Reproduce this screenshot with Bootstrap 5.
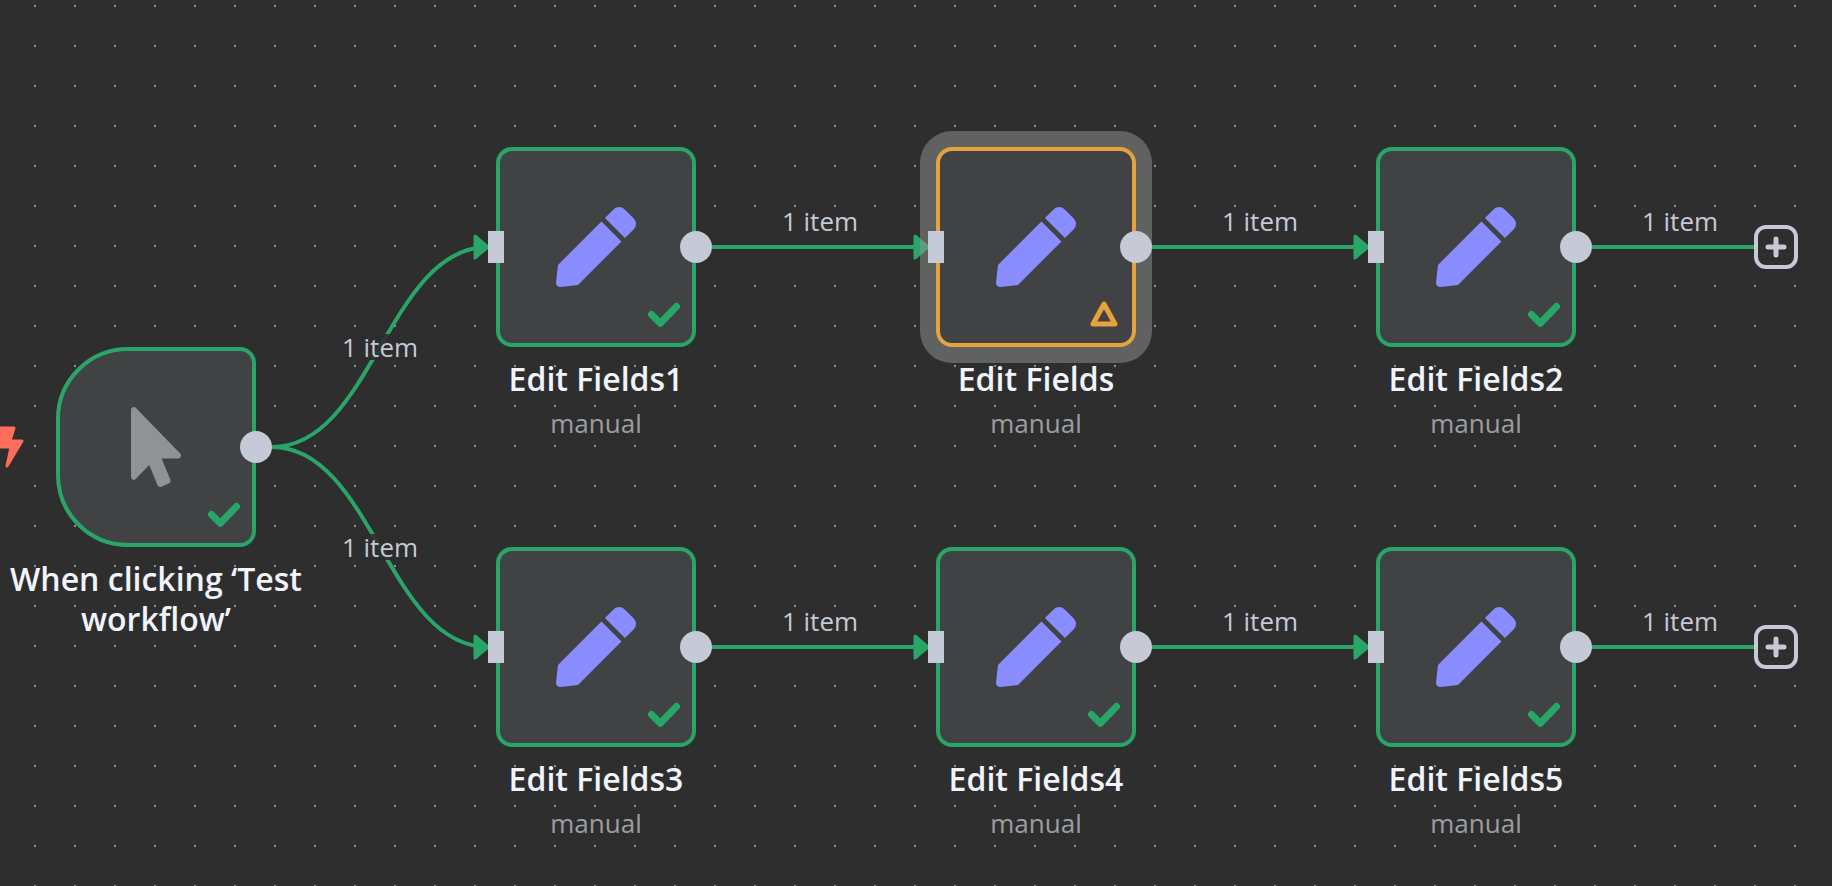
<!DOCTYPE html>
<html lang="en">
<head>
<meta charset="utf-8">
<meta name="viewport" content="width=device-width, initial-scale=1">
<title>Workflow canvas</title>
<link href="https://cdn.jsdelivr.net/npm/bootstrap@5.3.0/dist/css/bootstrap.min.css" rel="stylesheet">
<style>
  :root { --ok: #29a568; --warn: #e6a23c; --port: #c5cad6; --canvas: #2e2e2e; --tile: #414244; }
  body { background: var(--canvas); font-family: "Open Sans", sans-serif; }
  /* dotted grid, one 2px dot every 40px */
  .flow-canvas {
    background: conic-gradient(from 0deg at 2px 2px, transparent 270deg, #909090 0) 34px 5px / 40px 40px;
  }
  .flow-edges { inset: 0; fill: none; stroke: var(--ok); stroke-width: 4; }
  .flow-node { width: 200px; left: var(--x); top: var(--y); }
  .flow-tile { height: 200px; background: var(--tile); border: 4px solid var(--ok); border-radius: 16px; }
  .flow-tile.is-trigger { border-radius: 72px 16px 16px 72px; }
  .flow-tile.is-warning { border-color: var(--warn); box-shadow: 0 0 0 16px rgba(146, 150, 146, .5); }
  .node-icon { width: 80px; height: 80px; fill: #8a8dff; }
  .is-trigger .node-icon { fill: #919295; }
  .node-status { width: 32px; height: 32px; right: 12px; bottom: 12px; fill: none; stroke: var(--ok); stroke-width: 7; stroke-linecap: round; stroke-linejoin: round; }
  .is-warning .node-status { stroke: var(--warn); stroke-width: 5; }
  .port-in, .port-out { background: var(--port); height: 32px; top: 84px; }
  .port-in { width: 16px; left: -8px; }
  .port-out { width: 32px; right: -16px; }
  .flow-caption { width: 304px; margin-left: -52px; line-height: 40px; }
  .caption-title { font-size: 32px; font-weight: 600; color: #f2f4fc; }
  .caption-sub { font-size: 26px; color: #9b9ea3; }
  .edge-label { left: var(--x); top: var(--y); font-size: 26px; line-height: 26px; color: var(--port); background: rgba(46, 46, 46, .9); }
  .edge-label.on-line { background: none; }
  .add-node { left: var(--x); top: var(--y); width: 44px; height: 44px; border: 4px solid var(--port); border-radius: 12px; background: var(--canvas); stroke: var(--port); stroke-width: 5; stroke-linecap: round; }
  .trigger-bolt { left: 0; top: 425px; fill: #ff6d5a; stroke: #ff6d5a; stroke-width: 3; stroke-linejoin: round; }
</style>
</head>
<body>
<svg class="d-none" aria-hidden="true">
  <symbol id="pen" viewBox="0 0 512 512"><path d="M290.74 93.24l128.02 128.02-277.99 277.99-114.14 12.6C11.35 513.54-1.56 500.62.14 485.34l12.7-114.22 277.9-277.88zm207.2-19.06l-60.11-60.11c-18.75-18.75-49.16-18.75-67.91 0l-56.55 56.55 128.02 128.02 56.55-56.55c18.75-18.76 18.75-49.16 0-67.91z"/></symbol>
  <symbol id="pointer" viewBox="0 0 320 512"><path d="M302.189 329.126H196.105l55.831 135.993c3.889 9.428-.555 19.999-9.444 23.999l-49.165 21.427c-9.165 4-19.443-.571-23.332-9.714l-53.053-129.136-86.664 89.138C18.729 472.71 0 463.554 0 447.977V18.299C0 1.899 19.921-6.096 30.277 5.443l284.412 292.542c11.472 11.179 3.007 31.141-12.5 31.141z"/></symbol>
  <symbol id="check" viewBox="0 0 32 32"><path d="M3.5 15.5l8.8 8.8L28.5 7.5"/></symbol>
  <symbol id="triangle" viewBox="0 0 32 32"><path d="M16 5L5 25h22z"/></symbol>
  <symbol id="plus" viewBox="0 0 24 24"><path d="M12 4v16M4 12h16"/></symbol>
</svg>

<main class="flow-canvas position-relative vh-100 overflow-hidden">
  <svg class="flow-edges position-absolute w-100 h-100" aria-hidden="true">
    <defs>
      <marker id="arrow" markerUnits="userSpaceOnUse" markerWidth="22" markerHeight="28" refX="16" refY="14">
        <path d="M3 3L16 14 3 25z" fill="#29a568" stroke="#29a568" stroke-width="3" stroke-linejoin="round"/>
      </marker>
    </defs>
    <path d="M272 447C372 447 388 247 488 247" marker-end="url(#arrow)"/>
    <path d="M272 447C372 447 388 647 488 647" marker-end="url(#arrow)"/>
    <path d="M712 247H928" marker-end="url(#arrow)"/>
    <path d="M1152 247H1368" marker-end="url(#arrow)"/>
    <path d="M712 647H928" marker-end="url(#arrow)"/>
    <path d="M1152 647H1368" marker-end="url(#arrow)"/>
    <path d="M1592 247H1756M1592 647H1756"/>
  </svg>

  <span class="edge-label position-absolute translate-middle-x text-nowrap" style="--x:380px;--y:334px">1 item</span>
  <span class="edge-label position-absolute translate-middle-x text-nowrap" style="--x:380px;--y:534px">1 item</span>
  <span class="edge-label on-line position-absolute translate-middle-x text-nowrap" style="--x:820px;--y:208px">1 item</span>
  <span class="edge-label on-line position-absolute translate-middle-x text-nowrap" style="--x:1260px;--y:208px">1 item</span>
  <span class="edge-label on-line position-absolute translate-middle-x text-nowrap" style="--x:1680px;--y:208px">1 item</span>
  <span class="edge-label on-line position-absolute translate-middle-x text-nowrap" style="--x:820px;--y:608px">1 item</span>
  <span class="edge-label on-line position-absolute translate-middle-x text-nowrap" style="--x:1260px;--y:608px">1 item</span>
  <span class="edge-label on-line position-absolute translate-middle-x text-nowrap" style="--x:1680px;--y:608px">1 item</span>

  <svg class="trigger-bolt position-absolute" width="26" height="46" aria-hidden="true"><path d="M-8 3H14L10 16H22L7 41 11 22H-12z"/></svg>

  <section class="flow-node position-absolute" style="--x:56px;--y:347px">
    <div class="flow-tile is-trigger d-flex align-items-center justify-content-center position-relative">
      <svg class="node-icon"><use href="#pointer"/></svg>
      <svg class="node-status position-absolute"><use href="#check"/></svg>
    </div>
    <span class="port-out position-absolute rounded-circle"></span>
    <div class="flow-caption text-center pt-2 mt-1"><div class="caption-title">When clicking ‘Test workflow’</div></div>
  </section>

  <section class="flow-node position-absolute" style="--x:496px;--y:147px">
    <div class="flow-tile d-flex align-items-center justify-content-center position-relative">
      <svg class="node-icon"><use href="#pen"/></svg>
      <svg class="node-status position-absolute"><use href="#check"/></svg>
    </div>
    <span class="port-in position-absolute"></span><span class="port-out position-absolute rounded-circle"></span>
    <div class="flow-caption text-center pt-2 mt-1"><div class="caption-title">Edit Fields1</div><div class="caption-sub mt-1">manual</div></div>
  </section>

  <section class="flow-node position-absolute" style="--x:936px;--y:147px">
    <div class="flow-tile is-warning d-flex align-items-center justify-content-center position-relative">
      <svg class="node-icon"><use href="#pen"/></svg>
      <svg class="node-status position-absolute"><use href="#triangle"/></svg>
    </div>
    <span class="port-in position-absolute"></span><span class="port-out position-absolute rounded-circle"></span>
    <div class="flow-caption position-relative text-center pt-2 mt-1"><div class="caption-title">Edit Fields</div><div class="caption-sub mt-1">manual</div></div>
  </section>

  <section class="flow-node position-absolute" style="--x:1376px;--y:147px">
    <div class="flow-tile d-flex align-items-center justify-content-center position-relative">
      <svg class="node-icon"><use href="#pen"/></svg>
      <svg class="node-status position-absolute"><use href="#check"/></svg>
    </div>
    <span class="port-in position-absolute"></span><span class="port-out position-absolute rounded-circle"></span>
    <div class="flow-caption text-center pt-2 mt-1"><div class="caption-title">Edit Fields2</div><div class="caption-sub mt-1">manual</div></div>
  </section>

  <section class="flow-node position-absolute" style="--x:496px;--y:547px">
    <div class="flow-tile d-flex align-items-center justify-content-center position-relative">
      <svg class="node-icon"><use href="#pen"/></svg>
      <svg class="node-status position-absolute"><use href="#check"/></svg>
    </div>
    <span class="port-in position-absolute"></span><span class="port-out position-absolute rounded-circle"></span>
    <div class="flow-caption text-center pt-2 mt-1"><div class="caption-title">Edit Fields3</div><div class="caption-sub mt-1">manual</div></div>
  </section>

  <section class="flow-node position-absolute" style="--x:936px;--y:547px">
    <div class="flow-tile d-flex align-items-center justify-content-center position-relative">
      <svg class="node-icon"><use href="#pen"/></svg>
      <svg class="node-status position-absolute"><use href="#check"/></svg>
    </div>
    <span class="port-in position-absolute"></span><span class="port-out position-absolute rounded-circle"></span>
    <div class="flow-caption text-center pt-2 mt-1"><div class="caption-title">Edit Fields4</div><div class="caption-sub mt-1">manual</div></div>
  </section>

  <section class="flow-node position-absolute" style="--x:1376px;--y:547px">
    <div class="flow-tile d-flex align-items-center justify-content-center position-relative">
      <svg class="node-icon"><use href="#pen"/></svg>
      <svg class="node-status position-absolute"><use href="#check"/></svg>
    </div>
    <span class="port-in position-absolute"></span><span class="port-out position-absolute rounded-circle"></span>
    <div class="flow-caption text-center pt-2 mt-1"><div class="caption-title">Edit Fields5</div><div class="caption-sub mt-1">manual</div></div>
  </section>

  <button type="button" class="add-node position-absolute p-0 d-flex align-items-center justify-content-center" style="--x:1754px;--y:225px" aria-label="Add node"><svg width="24" height="24"><use href="#plus"/></svg></button>
  <button type="button" class="add-node position-absolute p-0 d-flex align-items-center justify-content-center" style="--x:1754px;--y:625px" aria-label="Add node"><svg width="24" height="24"><use href="#plus"/></svg></button>
</main>
<script src="https://cdn.jsdelivr.net/npm/bootstrap@5.3.0/dist/js/bootstrap.bundle.min.js"></script>
</body>
</html>
